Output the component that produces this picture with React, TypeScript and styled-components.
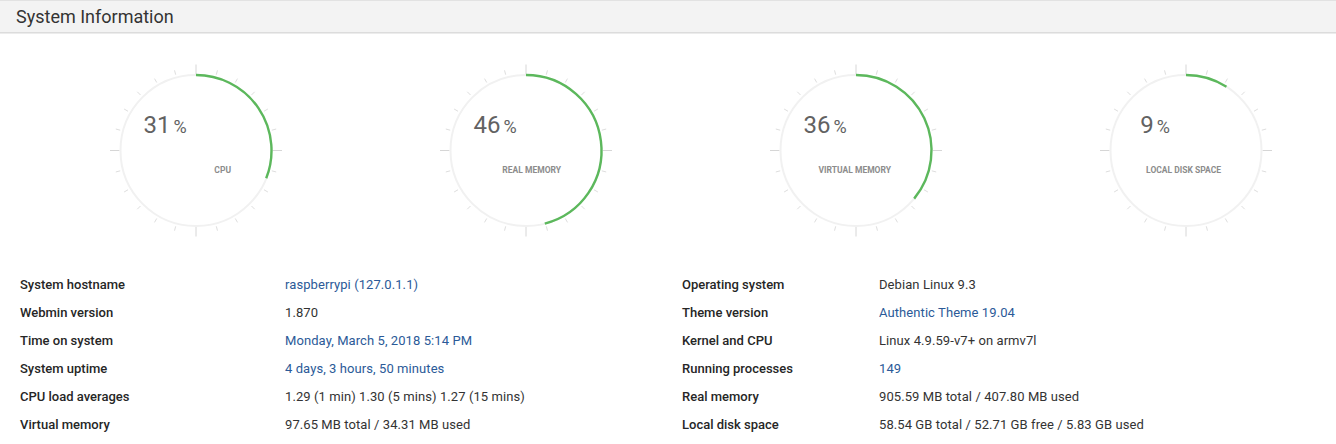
import React from 'react';
import styled, { createGlobalStyle } from 'styled-components';

const GlobalStyle = createGlobalStyle`
  html, body {
    margin: 0;
    padding: 0;
    background: #fff;
    font-family: Roboto, 'Liberation Sans', sans-serif;
  }
`;

interface GaugeData {
  value: number;
  label: string;
}

interface InfoRow {
  label: string;
  value: string;
  link?: boolean;
}

const gauges: GaugeData[] = [
  { value: 31, label: 'CPU' },
  { value: 46, label: 'Real memory' },
  { value: 36, label: 'Virtual memory' },
  { value: 9, label: 'Local disk space' },
];

const leftRows: InfoRow[] = [
  { label: 'System hostname', value: 'raspberrypi (127.0.1.1)', link: true },
  { label: 'Webmin version', value: '1.870' },
  { label: 'Time on system', value: 'Monday, March 5, 2018 5:14 PM', link: true },
  { label: 'System uptime', value: '4 days, 3 hours, 50 minutes', link: true },
  { label: 'CPU load averages', value: '1.29 (1 min) 1.30 (5 mins) 1.27 (15 mins)' },
  { label: 'Virtual memory', value: '97.65 MB total / 34.31 MB used' },
];

const rightRows: InfoRow[] = [
  { label: 'Operating system', value: 'Debian Linux 9.3' },
  { label: 'Theme version', value: 'Authentic Theme 19.04', link: true },
  { label: 'Kernel and CPU', value: 'Linux 4.9.59-v7+ on armv7l' },
  { label: 'Running processes', value: '149', link: true },
  { label: 'Real memory', value: '905.59 MB total / 407.80 MB used' },
  { label: 'Local disk space', value: '58.54 GB total / 52.71 GB free / 5.83 GB used' },
];

const Page = styled.div`
  width: 1336px;
  height: 444px;
  overflow: hidden;
`;

const Header = styled.div`
  height: 31px;
  display: flex;
  align-items: center;
  padding-left: 16px;
  background: #f3f3f3;
  border-top: 1px solid #e2e2e2;
  border-bottom: 1px solid #dcdcdc;
  box-shadow: 0 1px 0 #ececec;
`;

const Title = styled.h3`
  margin: 0;
  font-size: 18px;
  font-weight: 400;
  color: #333;
`;

const GaugeRow = styled.div`
  display: grid;
  grid-template-columns: repeat(4, 330px);
  padding-left: 31px;
  height: 237px;
`;

const GaugeSvg = styled.svg`
  display: block;
  width: 330px;
  height: 237px;
`;

const PercentText = styled.text`
  font-family: Roboto, 'Liberation Sans', sans-serif;
  font-size: 24px;
  fill: #626262;
`;

const GaugeLabel = styled.text`
  font-family: Roboto, 'Liberation Sans', sans-serif;
  font-size: 8.5px;
  font-weight: 700;
  fill: #8c8c8c;
  text-transform: uppercase;
`;

const InfoGrid = styled.div`
  display: grid;
  grid-template-columns: 662px 1fr;
  padding-left: 8px;
`;

const InfoTable = styled.div<{ $labelWidth: number }>`
  display: grid;
  grid-template-columns: ${(p) => p.$labelWidth}px 1fr;
  grid-auto-rows: 28px;
  align-items: center;
`;

const Label = styled.div`
  padding: 0 12px;
  font-size: 13px;
  font-weight: 500;
  color: #262626;
  white-space: nowrap;
`;

const Value = styled.div<{ $link?: boolean }>`
  padding: 0 12px;
  font-size: 13px;
  letter-spacing: 0.08px;
  color: ${(p) => (p.$link ? '#2b5a98' : '#333')};
  white-space: nowrap;
`;

const CX = 165;
const CY = 117.5;
const R = 75.5;

const Gauge = ({ value, label }: GaugeData) => {
  const angle = (value / 100) * 2 * Math.PI;
  const ex = CX + R * Math.sin(angle);
  const ey = CY - R * Math.cos(angle);
  const large = value > 50 ? 1 : 0;

  const ticks = Array.from({ length: 24 }, (_, i) => {
    const a = (i * 15 * Math.PI) / 180;
    const major = i % 6 === 0;
    const r1 = major ? 76.5 : 78.5;
    const r2 = major ? 86 : 83;
    return (
      <line
        key={i}
        x1={CX + r1 * Math.sin(a)}
        y1={CY - r1 * Math.cos(a)}
        x2={CX + r2 * Math.sin(a)}
        y2={CY - r2 * Math.cos(a)}
        stroke={major ? '#d6d6d6' : '#dedede'}
        strokeWidth={1}
      />
    );
  });

  return (
    <GaugeSvg viewBox='0 0 330 237'>
      {ticks}
      <circle cx={CX} cy={CY} r={R} fill='none' stroke='#f1f1f1' strokeWidth={2} />
      <path
        d={`M ${CX} ${CY - R} A ${R} ${R} 0 ${large} 1 ${ex} ${ey}`}
        fill='none'
        stroke='#5cb85c'
        strokeWidth={2.4}
      />
      <PercentText x={CX - 31} y={CY - 17.5} textAnchor='middle'>
        {value}
        <tspan dx='3' fontSize='18'>
          %
        </tspan>
      </PercentText>
      <GaugeLabel x={CX + 35} y={CY + 22} textAnchor='end'>
        {label}
      </GaugeLabel>
    </GaugeSvg>
  );
};

const App = () => {
  return (
    <Page>
      <GlobalStyle />
      <Header>
        <Title>System Information</Title>
      </Header>
      <GaugeRow>
        {gauges.map((g) => (
          <Gauge key={g.label} value={g.value} label={g.label} />
        ))}
      </GaugeRow>
      <InfoGrid>
        <InfoTable $labelWidth={265}>
          {leftRows.map((r) => (
            <React.Fragment key={r.label}>
              <Label>{r.label}</Label>
              <Value $link={r.link}>{r.value}</Value>
            </React.Fragment>
          ))}
        </InfoTable>
        <InfoTable $labelWidth={197}>
          {rightRows.map((r) => (
            <React.Fragment key={r.label}>
              <Label>{r.label}</Label>
              <Value $link={r.link}>{r.value}</Value>
            </React.Fragment>
          ))}
        </InfoTable>
      </InfoGrid>
    </Page>
  );
};

export default App;
